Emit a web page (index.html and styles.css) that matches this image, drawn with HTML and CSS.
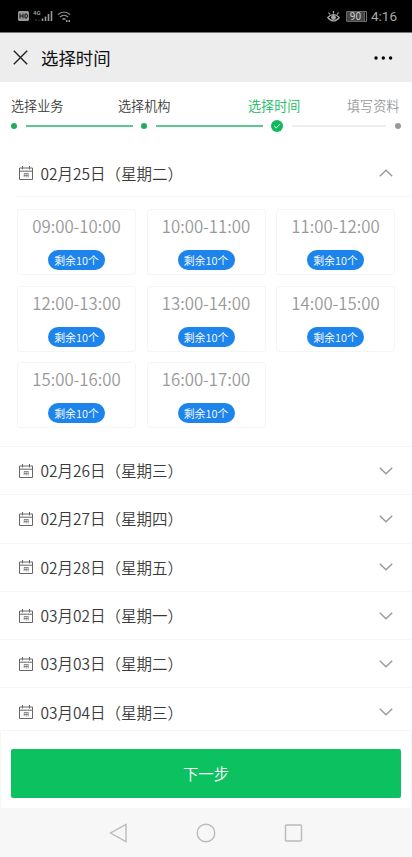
FILE: index.html
```html
<!DOCTYPE html>
<html lang="zh-CN">
<head>
    <meta charset="UTF-8">
    <meta name="viewport" content="width=device-width, initial-scale=1.0">
    <title>选择时间</title>
    <link rel="stylesheet" href="styles.css">
</head>
<body>
    <!-- shared icons -->
    <svg class="sprite" width="0" height="0">
        <symbol id="calendar" viewBox="0 0 14 14">
            <path d="M.5 2h13v11.5H.5zM.5 5.2h13M3.5 0v3.4M10.500 0v3.4" fill="none" stroke="#666" stroke-width="1"/>
            <path d="M5 7.500h4.400M5.200 7.500v3.500M7.200 7.500v4M9.200 7.500v4M5 9.500h4.400" fill="none" stroke="#777" stroke-width=".8"/>
        </symbol>
        <symbol id="arrow" viewBox="0 0 14 8">
            <path d="M.8.8L7 6.8l6.2-6" fill="none" stroke="#999" stroke-width="1.4"/>
        </symbol>
    </svg>

    <div class="status-bar">
        <svg class="status-left" width="54" height="14" viewBox="0 0 54 14">
            <rect x="0" y="2" width="11" height="10" rx="1.5" fill="#999"/>
            <path d="M2 4.500v5M5 4.500v5M2 7h3M7 5h1q1.500 0 1.500 2T8 9H7z" stroke="#111" fill="none"/>
            <text x="15" y="6" class="net">4G</text>
            <path d="M18 12v-2M21 12v-1" stroke="#444"/>
            <path d="M24.500 12V9.500M27.500 12V7.500M30.500 12V5M33.500 12V2" stroke="#999" stroke-width="1.6"/>
            <path d="M40 5.500q6-5 12 0M42 8q4-3.500 8 0M44.500 10.500q1.500-1.500 3 0" stroke="#999" stroke-width="1.2" fill="none"/>
            <path d="M48 12h1.500M50.500 12h1.500" stroke="#999" stroke-width="2"/>
        </svg>
        <div class="status-right">
            <svg width="13" height="13" viewBox="0 0 13 13" fill="none" stroke="#aaa" stroke-width="1.2">
                <path d="M.8 7.500q5.700-6 11.400 0-5.700 7-11.400 0zM6.500 1v2.500M1.500 2.500l1.500 2M11.500 2.500l-1.500 2"/>
                <circle cx="6.5" cy="7.5" r="1.8" fill="#aaa"/>
            </svg>
            <span class="battery">90</span>
            <span class="clock">4:16</span>
        </div>
    </div>

    <div class="nav-bar">
        <svg width="15" height="15" viewBox="0 0 15 15"><path d="M.8.8l13.400 13.400M14.200.8L.8 14.200" stroke="#222" stroke-width="1.4"/></svg>
        <h1>选择时间</h1>
        <svg class="more" width="19" height="4" viewBox="0 0 19 4"><circle cx="2" cy="2" r="1.7"/><circle cx="9.3" cy="2" r="1.7"/><circle cx="16.6" cy="2" r="1.7"/></svg>
    </div>

    <div class="steps">
        <div class="labels">
            <span>选择业务</span>
            <span>选择机构</span>
            <span class="active">选择时间</span>
            <span class="todo">填写资料</span>
        </div>
        <div class="track">
            <i class="dot"></i>
            <i class="line"></i>
            <i class="dot"></i>
            <i class="line"></i>
            <svg width="12" height="12" viewBox="0 0 12 12"><circle cx="6" cy="6" r="6" fill="#10b85e"/><path d="M3.200 6l2 1.900 3.600-3.500" fill="none" stroke="#fff"/></svg>
            <i class="line line-todo"></i>
            <i class="dot dot-todo"></i>
        </div>
    </div>

    <div class="days">
        <div class="day open">
            <svg class="calendar"><use href="#calendar"/></svg>
            <span>02月25日（星期二）</span>
            <svg class="arrow up"><use href="#arrow"/></svg>
        </div>
        <div class="slots">
            <div class="slot"><p>09:00-10:00</p><span>剩余10个</span></div>
            <div class="slot"><p>10:00-11:00</p><span>剩余10个</span></div>
            <div class="slot"><p>11:00-12:00</p><span>剩余10个</span></div>
            <div class="slot"><p>12:00-13:00</p><span>剩余10个</span></div>
            <div class="slot"><p>13:00-14:00</p><span>剩余10个</span></div>
            <div class="slot"><p>14:00-15:00</p><span>剩余10个</span></div>
            <div class="slot"><p>15:00-16:00</p><span>剩余10个</span></div>
            <div class="slot"><p>16:00-17:00</p><span>剩余10个</span></div>
        </div>
        <div class="day">
            <svg class="calendar"><use href="#calendar"/></svg>
            <span>02月26日（星期三）</span>
            <svg class="arrow"><use href="#arrow"/></svg>
        </div>
        <div class="day">
            <svg class="calendar"><use href="#calendar"/></svg>
            <span>02月27日（星期四）</span>
            <svg class="arrow"><use href="#arrow"/></svg>
        </div>
        <div class="day">
            <svg class="calendar"><use href="#calendar"/></svg>
            <span>02月28日（星期五）</span>
            <svg class="arrow"><use href="#arrow"/></svg>
        </div>
        <div class="day">
            <svg class="calendar"><use href="#calendar"/></svg>
            <span>03月02日（星期一）</span>
            <svg class="arrow"><use href="#arrow"/></svg>
        </div>
        <div class="day">
            <svg class="calendar"><use href="#calendar"/></svg>
            <span>03月03日（星期二）</span>
            <svg class="arrow"><use href="#arrow"/></svg>
        </div>
        <div class="day">
            <svg class="calendar"><use href="#calendar"/></svg>
            <span>03月04日（星期三）</span>
            <svg class="arrow"><use href="#arrow"/></svg>
        </div>
    </div>

    <div class="footer">
        <button type="button">下一步</button>
    </div>

    <div class="system-nav">
        <svg width="20" height="20" viewBox="0 0 20 20"><path d="M17 1.500v17L1.500 10z"/></svg>
        <svg width="20" height="20" viewBox="0 0 20 20"><circle cx="10" cy="10" r="8.8"/></svg>
        <svg width="20" height="20" viewBox="0 0 20 20"><rect x="1.5" y="2" width="16" height="16" rx="1"/></svg>
    </div>
</body>
</html>
```
FILE: styles.css
```css
* {
    box-sizing: border-box;
}

body {
    margin: 0;
    height: 857px;
    display: flex;
    flex-direction: column;
    overflow: hidden;
    background-color: #fff;
    color: #3a3a3a;
    font-family: "Noto Sans CJK SC", sans-serif;
    font-weight: 350;
}

svg {
    display: block;
    flex: none;
}

.sprite {
    position: absolute;
}

.status-bar {
    flex: none;
    height: 33px;
    padding: 0 15px 0 18px;
    display: flex;
    align-items: center;
    justify-content: space-between;
    background-color: #000;
    border-bottom: 1px solid #777;
    color: #aaa;
}

.net {
    font: bold 6px Roboto, sans-serif;
    fill: #999;
}

.status-right {
    display: flex;
    align-items: center;
}

.battery {
    width: 19px;
    height: 11px;
    margin: 0 6px 0 6px;
    background-color: #444;
    border: 1px solid #666;
    border-radius: 1px;
    box-shadow: 2px 0 0 -1px #000, 2px 0 0 0 #777;
    font: 10px/9px Roboto, sans-serif;
    text-align: center;
    color: #ccc;
}

.clock {
    font: 13.5px Roboto, sans-serif;
}

.nav-bar {
    flex: none;
    height: 49px;
    padding: 0 19px 0 13px;
    display: flex;
    align-items: center;
    background-color: #ededed;
}

.nav-bar h1 {
    margin: 0 auto 1px 13px;
    font-size: 17.4px;
    font-weight: 400;
    color: #111;
}

.steps {
    flex: none;
    height: 66px;
    padding: 14px 11px 0;
}

.labels {
    display: grid;
    grid-template-columns: 107px 130px 99px 53px;
    font-size: 13.1px;
    line-height: 20px;
    white-space: nowrap;
}

.active {
    color: #10b85e;
}

.todo {
    color: #999;
}

.track {
    height: 12px;
    margin-top: 4px;
    display: flex;
    align-items: center;
}

.dot {
    width: 6px;
    height: 6px;
    border-radius: 50%;
    background-color: #20ac60;
}

.line {
    width: 107px;
    height: 1.5px;
    margin: 0 8px 0 9px;
    background-color: #5cc792;
}

.line-todo {
    width: 94px;
    margin: 0 9px 0 9px;
    background-color: #eee;
}

.dot-todo {
    background-color: #999;
}

.days {
    flex: 1;
    min-height: 0;
    overflow: hidden;
}

.day {
    height: 48.3px;
    padding: 0 19px;
    display: flex;
    align-items: center;
    border-top: 1px solid #f5f5f5;
    font-size: 15.5px;
}

.day span {
    margin-bottom: 1px;
}

.open {
    padding-top: 2px;
    border-top: none;
}

.calendar {
    width: 14px;
    height: 14px;
    margin-right: 7.5px;
}

.arrow {
    width: 14px;
    height: 8px;
    margin-left: auto;
}

.up {
    transform: rotate(180deg);
}

.slots {
    height: 249.7px;
    margin-left: 17px;
    padding: 12px 17px 0 0;
    display: grid;
    grid-template-columns: repeat(3, 119px);
    grid-auto-rows: 66px;
    gap: 10.5px;
    border-top: 1px solid #f5f5f5;
}

.slot {
    display: flex;
    flex-direction: column;
    align-items: center;
    border: 1px solid #f5f5f5;
    border-radius: 3px;
}

.slot p {
    margin: 4px 0 12px;
    font-size: 16.8px;
    line-height: 24px;
    color: #999;
}

.slot span {
    width: 57px;
    border-radius: 10px;
    background-color: #1d84ec;
    font-size: 10.9px;
    line-height: 20px;
    text-align: center;
    color: #fff;
}

.footer {
    flex: none;
    height: 78px;
    padding: 18px 10px 0;
    background-color: #fff;
    border: 1px solid #f5f5f5;
    border-bottom: none;
}

.footer button {
    display: block;
    width: 100%;
    height: 49px;
    padding-bottom: 2px;
    border: none;
    border-radius: 2px;
    background-color: #0bc160;
    font-family: inherit;
    font-size: 15.4px;
    font-weight: 350;
    color: #fff;
}

.system-nav {
    flex: none;
    height: 49px;
    display: flex;
    align-items: center;
    justify-content: center;
    gap: 67.5px;
    background-color: #f7f7f7;
    fill: none;
    stroke: #bbb;
    stroke-width: 1.4;
}
```
